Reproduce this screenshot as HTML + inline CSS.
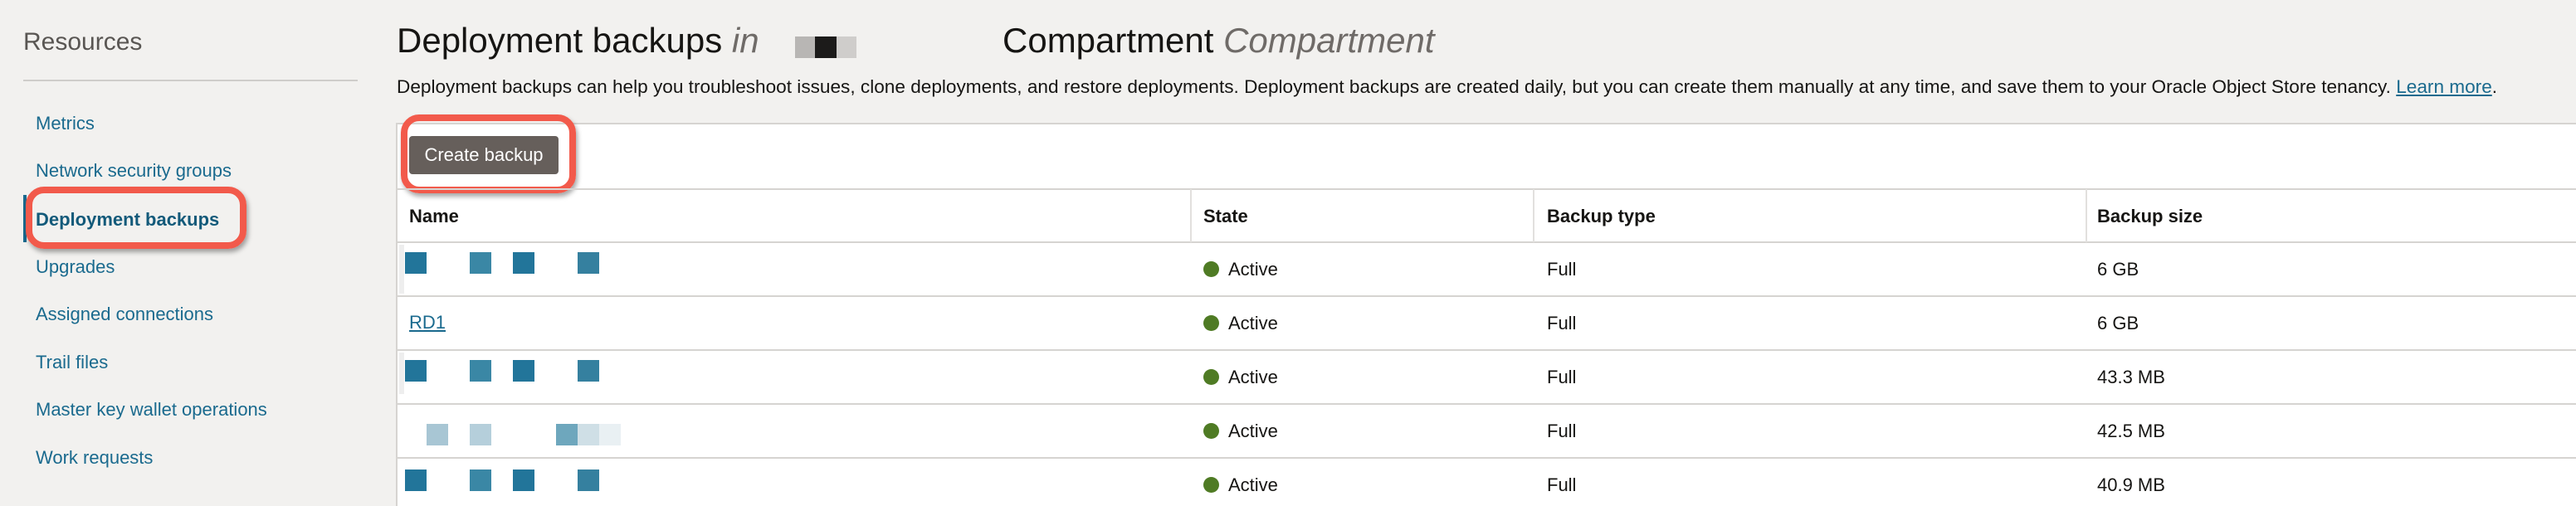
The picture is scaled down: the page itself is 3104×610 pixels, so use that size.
<!DOCTYPE html>
<html><head><meta charset="utf-8"><style>
*{margin:0;padding:0;box-sizing:border-box}
body{width:3104px;height:610px;overflow:hidden;background:#f2f1ef;font-family:"Liberation Sans",Arial,sans-serif;position:relative;color:#161513}
.a{position:absolute;white-space:nowrap}
.nav{position:absolute;left:43px;font-size:22px;color:#1a6a8e;line-height:26px}
.hl{position:absolute;border:8px solid #f25a4b;border-radius:22px;box-shadow:2px 4px 6px rgba(0,0,0,.35)}
.cell{position:absolute;font-size:22px;line-height:26px}
.hr{position:absolute;left:477px;right:0;height:2px;background:#d6d4d1}
.dot{position:absolute;width:19px;height:19px;border-radius:50%;background:#4f7b24}
.b{position:absolute;width:26px;height:26px}
</style></head><body>
<div class="a" style="left:28px;top:34px;font-size:30px;color:#595653;font-weight:300;line-height:34px">Resources</div>
<div class="a" style="left:28px;top:96px;width:403px;height:2px;background:#cfcdca"></div>
<div class="nav" style="top:136px">Metrics</div>
<div class="nav" style="top:193px">Network security groups</div>
<div class="a" style="left:28px;top:235px;width:4px;height:57px;background:#1a6a8e"></div>
<div class="nav" style="top:252px;font-weight:bold;color:#135a7a">Deployment backups</div>
<div class="nav" style="top:309px">Upgrades</div>
<div class="nav" style="top:366px">Assigned connections</div>
<div class="nav" style="top:424px">Trail files</div>
<div class="nav" style="top:481px">Master key wallet operations</div>
<div class="nav" style="top:539px">Work requests</div>
<div class="hl" style="left:31px;top:225px;width:266px;height:75px"></div>

<div class="a" style="left:478px;top:24px;font-size:42px;line-height:50px">Deployment backups <i style="color:#6f6b68">in</i></div>
<div class="a" style="left:958px;top:44px;width:24px;height:26px;background:#b8b6b4"></div>
<div class="a" style="left:982px;top:44px;width:26px;height:26px;background:#1c1b1a"></div>
<div class="a" style="left:1008px;top:44px;width:24px;height:26px;background:#cfcdcb"></div>
<div class="a" style="left:1208px;top:24px;font-size:42px;line-height:50px">Compartment <i style="color:#6f6b68">Compartment</i></div>
<div class="a" style="left:478px;top:92px;font-size:22.6px;line-height:26px">Deployment backups can help you troubleshoot issues, clone deployments, and restore deployments. Deployment backups are created daily, but you can create them manually at any time, and save them to your Oracle Object Store tenancy. <span style="color:#1a6a8e;text-decoration:underline">Learn more</span>.</div>

<div class="a" style="left:477px;top:148px;right:0;height:462px;background:#fff;border-left:2px solid #d6d4d1;border-top:2px solid #d6d4d1"></div>
<div class="a" style="left:493px;top:164px;width:180px;height:46px;background:#665f5b;border-radius:4px;color:#fff;font-size:22px;line-height:46px;text-align:center">Create backup</div>
<div class="hl" style="left:483px;top:138px;width:211px;height:95px"></div>

<div class="hr" style="top:227px"></div>
<div class="hr" style="top:291px"></div>
<div class="hr" style="top:356px"></div>
<div class="hr" style="top:421px"></div>
<div class="hr" style="top:486px"></div>
<div class="hr" style="top:551px"></div>
<div class="a" style="left:1434px;top:228px;width:2px;height:64px;background:#e2e0de"></div>
<div class="a" style="left:1847px;top:228px;width:2px;height:64px;background:#e2e0de"></div>
<div class="a" style="left:2513px;top:228px;width:2px;height:64px;background:#e2e0de"></div>
<div class="cell" style="left:493px;top:248px;font-weight:bold">Name</div>
<div class="cell" style="left:1450px;top:248px;font-weight:bold">State</div>
<div class="cell" style="left:1864px;top:248px;font-weight:bold">Backup type</div>
<div class="cell" style="left:2527px;top:248px;font-weight:bold">Backup size</div>

<div class="a" style="left:481px;top:295px;width:6px;height:59px;background:#eeeeee"></div>
<div class="b" style="left:488px;top:304px;background:#22759a"></div>
<div class="b" style="left:566px;top:304px;background:#3a87a5"></div>
<div class="b" style="left:618px;top:304px;background:#22759a"></div>
<div class="b" style="left:696px;top:304px;background:#35809f"></div>
<div class="cell" style="left:493px;top:376px;color:#1a6a8e;text-decoration:underline">RD1</div>
<div class="a" style="left:481px;top:425px;width:6px;height:50px;background:#eeeeee"></div>
<div class="b" style="left:488px;top:434px;background:#22759a"></div>
<div class="b" style="left:566px;top:434px;background:#3a87a5"></div>
<div class="b" style="left:618px;top:434px;background:#22759a"></div>
<div class="b" style="left:696px;top:434px;background:#35809f"></div>
<div class="b" style="left:514px;top:511px;background:#a8c6d4"></div>
<div class="b" style="left:566px;top:511px;background:#b5cfdb"></div>
<div class="b" style="left:670px;top:511px;background:#6ea7bd"></div>
<div class="b" style="left:696px;top:511px;background:#cfdfe6"></div>
<div class="b" style="left:722px;top:511px;background:#e9f0f3"></div>
<div class="b" style="left:488px;top:566px;background:#22759a"></div>
<div class="b" style="left:566px;top:566px;background:#3a87a5"></div>
<div class="b" style="left:618px;top:566px;background:#22759a"></div>
<div class="b" style="left:696px;top:566px;background:#35809f"></div>

<div class="dot" style="left:1450px;top:315px"></div><div class="cell" style="left:1480px;top:312px">Active</div>
<div class="cell" style="left:1864px;top:312px">Full</div><div class="cell" style="left:2527px;top:312px">6 GB</div>
<div class="dot" style="left:1450px;top:380px"></div><div class="cell" style="left:1480px;top:377px">Active</div>
<div class="cell" style="left:1864px;top:377px">Full</div><div class="cell" style="left:2527px;top:377px">6 GB</div>
<div class="dot" style="left:1450px;top:445px"></div><div class="cell" style="left:1480px;top:442px">Active</div>
<div class="cell" style="left:1864px;top:442px">Full</div><div class="cell" style="left:2527px;top:442px">43.3 MB</div>
<div class="dot" style="left:1450px;top:510px"></div><div class="cell" style="left:1480px;top:507px">Active</div>
<div class="cell" style="left:1864px;top:507px">Full</div><div class="cell" style="left:2527px;top:507px">42.5 MB</div>
<div class="dot" style="left:1450px;top:575px"></div><div class="cell" style="left:1480px;top:572px">Active</div>
<div class="cell" style="left:1864px;top:572px">Full</div><div class="cell" style="left:2527px;top:572px">40.9 MB</div>
</body></html>
